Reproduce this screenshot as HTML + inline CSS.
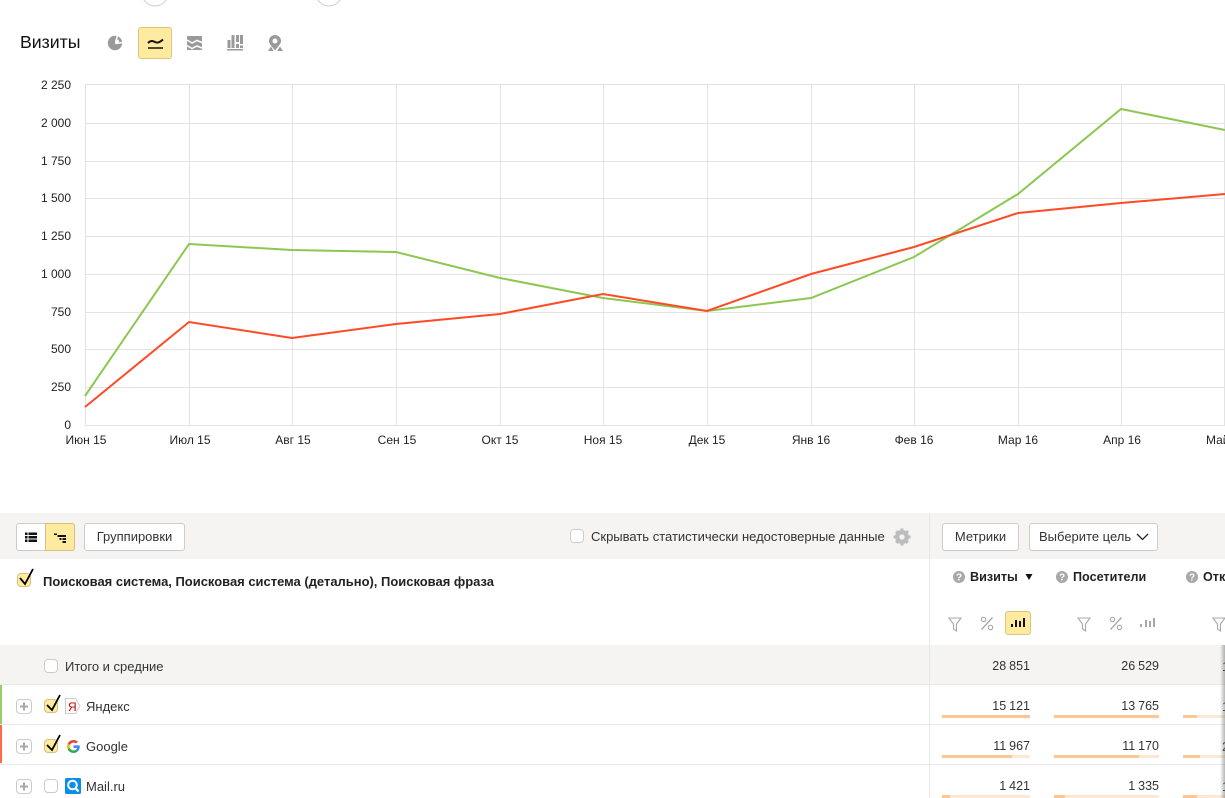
<!DOCTYPE html>
<html lang="ru"><head><meta charset="utf-8"><title>Визиты</title>
<style>
html,body{margin:0;padding:0;background:#fff}
#p{position:relative;width:1225px;height:798px;overflow:hidden;font-family:"Liberation Sans",sans-serif;font-size:12px;color:#222;background:#fff}
.a{position:absolute;white-space:nowrap}
.btn{position:absolute;box-sizing:border-box;height:28px;border:1px solid #ccc;border-radius:3px;background:#fff;line-height:25px;text-align:center;font-size:13px;color:#333}
.cb{position:absolute;box-sizing:border-box;width:14px;height:14px;border:1px solid #ccc;border-radius:4px;background:#fff}
.cb.on{background:#ffeba0;border-color:#d6c27f}
.pl{position:absolute;box-sizing:border-box;left:16px;width:16px;height:15px;border:1px solid #ccc;border-radius:4px;background:#fff}
.n{position:absolute;text-align:right;font-size:12.5px;word-spacing:-.5px;color:#333;white-space:nowrap}
.bar{position:absolute;height:3px;background:#fde8d4}
.bar i{position:absolute;left:0;top:0;height:3px;background:#fdc693}
.t{position:absolute;font-size:13px;color:#333;white-space:nowrap}
.h{position:absolute;font-size:12.6px;font-weight:bold;color:#222;white-space:nowrap}
svg{position:absolute;overflow:visible}
</style></head><body><div id="p">

<svg style="left:0;top:0" width="360" height="10"><circle cx="155" cy="-7" r="13" fill="#fff" stroke="#ccc"/><circle cx="329" cy="-7" r="13" fill="#fff" stroke="#ccc"/></svg>

<div class="a" style="left:20px;top:32px;font-size:17.7px;color:#111">Визиты</div>
<div class="a" style="left:138px;top:27px;width:34px;height:32px;box-sizing:border-box;background:#ffeba0;border:1px solid #dcc77f;border-radius:3px"></div>

<svg style="left:100px;top:25px" width="200" height="35">
<circle cx="15" cy="18" r="7.200" fill="#9a9a9a"/><path d="M15.500 18.500L17.500 10M15.500 18.500L23 17.500" stroke="#fff" stroke-width="1.500" fill="none"/><circle cx="17" cy="16.500" r="2" fill="#fff"/>
<path d="M48 18c3-3 5-2 7-1s4 1 8-2.500" fill="none" stroke="#111" stroke-width="2"/><path d="M48 23h15" stroke="#111" stroke-width="1.500"/>
<rect x="87" y="11" width="15" height="14" fill="#9a9a9a"/><path d="M87 15l5 3 5-2.500 5 2M87 20.500l5 3 5-2.500 5 2" fill="none" stroke="#fff" stroke-width="1.500"/>
<path d="M127.500 15h3v8h-3zM131.500 10h3v13h-3zM136 10h3v7h-3zM136 19h3v4h-3zM140 10h3v9h-3zM140 20.500h3v2.500h-3zM127 24h16v1.500h-16z" fill="#9a9a9a"/>
<path d="M175 10a6 6 0 0 0-6 6c0 3 3 5.500 6 9.500 3-4 6-6.500 6-9.500a6 6 0 0 0-6-6zm0 3.500a2.500 2.500 0 1 1 0 5 2.500 2.500 0 0 1 0-5z" fill="#9a9a9a" fill-rule="evenodd"/><path d="M168 26l3-4.500 2.500 4.500zM177 26l3-4.500 3 4.500z" fill="#9a9a9a"/>
</svg>

<svg style="left:0;top:0" width="1225" height="450" font-family="Liberation Sans, sans-serif" font-size="12" fill="#222">
<g stroke="#e3e3e3" fill="none" shape-rendering="crispEdges">
<path d="M85.500 84V426M189.500 84V426M292.500 84V426M396.500 84V426M500.500 84V426M603.500 84V426M707.500 84V426M811.500 84V426M914.500 84V426M1018.500 84V426M1121.500 84V426M1224.500 84V426"/>
<path d="M85 84.500H1225M85 123.500H1225M85 161.500H1225M85 198.500H1225M85 236.500H1225M85 274.500H1225M85 312.500H1225M85 349.500H1225M85 387.500H1225M85 425.500H1225"/>
</g>
<polyline fill="none" stroke="#8cc751" stroke-width="2" points="85,396 189,244 292,250 396,252 500,278 603,298 707,311 811,298 914,257 1018,194 1121,109 1225,130"/>
<polyline fill="none" stroke="#ff4a25" stroke-width="2" points="85,407 189,322 292,338 396,324 500,314 603,294 707,311 811,274 914,247 1018,213 1121,203 1225,194"/>
<g text-anchor="end">
<text x="71" y="89">2 250</text><text x="71" y="127">2 000</text><text x="71" y="165">1 750</text><text x="71" y="202">1 500</text><text x="71" y="240">1 250</text><text x="71" y="278">1 000</text><text x="71" y="316">750</text><text x="71" y="353">500</text><text x="71" y="391">250</text><text x="71" y="429">0</text>
</g>
<g text-anchor="middle">
<text x="86" y="444">Июн 15</text><text x="190" y="444">Июл 15</text><text x="293" y="444">Авг 15</text><text x="397" y="444">Сен 15</text><text x="500" y="444">Окт 15</text><text x="603" y="444">Ноя 15</text><text x="707" y="444">Дек 15</text><text x="811" y="444">Янв 16</text><text x="914" y="444">Фев 16</text><text x="1018" y="444">Мар 16</text><text x="1122" y="444">Апр 16</text>
</g>
<text x="1206" y="444">Май 16</text>
</svg>

<div class="a" style="left:0;top:513px;width:1225px;height:46px;background:#f5f4f2"></div>
<div class="a" style="left:0;top:645px;width:1225px;height:39px;background:#f5f4f2"></div>
<div class="a" style="left:0;top:684px;width:1225px;height:1px;background:#e8e8e8"></div>
<div class="a" style="left:0;top:724px;width:1225px;height:1px;background:#e8e8e8"></div>
<div class="a" style="left:0;top:764px;width:1225px;height:1px;background:#e8e8e8"></div>
<div class="a" style="left:929px;top:513px;width:1px;height:285px;background:#e8e8e8"></div>
<div class="a" style="left:0;top:685px;width:2px;height:39px;background:#96ce6a"></div>
<div class="a" style="left:0;top:725px;width:2px;height:38px;background:#ff6a4a"></div>

<div class="a" style="left:16px;top:523px;width:59px;height:28px;box-sizing:border-box;border:1px solid #ccc;border-radius:3px;background:#fff"></div>
<div class="a" style="left:45px;top:523px;width:30px;height:28px;box-sizing:border-box;border:1px solid #d6c27f;border-radius:0 3px 3px 0;background:#ffeba0"></div>
<svg style="left:16px;top:523px" width="59" height="28">
<path d="M9 9.500h2.500V12H9zM9 13h2.500v2.500H9zM9 16.500h2.500V19H9zM12.500 9.500H21V12h-8.500zM12.500 13H21v2.500h-8.500zM12.500 16.500H21V19h-8.500z" fill="#111"/>
<path d="M38 10.500h3v1.500h-3zM41.500 12h8.500v2h-8.500zM43.500 15h2v2h-2zM46.500 15h3.500v2h-3.500zM46.500 18h3.500v2h-3.500z" fill="#111"/>
</svg>
<div class="btn" style="left:84px;top:523px;width:101px">Группировки</div>

<div class="cb" style="left:570px;top:529px"></div>
<div class="t" style="left:591px;top:529px">Скрывать статистически недостоверные данные</div>
<svg style="left:893px;top:528px" width="18" height="18" viewBox="0 0 18 18"><circle cx="9" cy="9" r="4.800" fill="none" stroke="#bdbdbd" stroke-width="4.400"/><path d="M7.500.500h3v3h-3zM7.500 14.500h3v3h-3zM.5 7.500h3v3h-3zM14.500 7.500h3v3h-3z" fill="#bdbdbd"/><path d="M2 4.500l2.500-2.500 2 2-2.500 2.500zM11.500 14l2.500-2.500 2 2-2.500 2.500zM11.500 4l2.500-2 2 2-2 2.500zM2 13.500l2.500-2 2 2-2 2.500z" fill="#bdbdbd"/></svg>

<div class="btn" style="left:942px;top:523px;width:77px">Метрики</div>
<div class="btn" style="left:1029px;top:523px;width:129px;text-align:left;padding-left:9px">Выберите цель</div>
<svg style="left:1136px;top:532px" width="14" height="10"><path d="M1 2l5.500 5.500L12 2" fill="none" stroke="#222" stroke-width="1.300"/></svg>

<div class="cb on" style="left:17px;top:573px"></div>
<svg style="left:16px;top:567px" width="20" height="20"><path d="M4 11l5 6 8-15" fill="none" stroke="#000" stroke-width="1.800"/></svg>
<div class="t" style="left:43px;top:574px;font-weight:bold;color:#222;font-size:12.97px">Поисковая система, Поисковая система (детально), Поисковая фраза</div>

<svg style="left:953px;top:571px" width="250" height="14">
<g fill="#a8a8a8"><circle cx="6" cy="6" r="6"/><circle cx="109" cy="6" r="6"/><circle cx="239" cy="6" r="6"/></g>
<g fill="#fff" font-family="Liberation Sans, sans-serif" font-size="10" font-weight="bold" text-anchor="middle"><text x="6" y="9.500">?</text><text x="109" y="9.500">?</text><text x="239" y="9.500">?</text></g>
<path d="M72.500 3h7l-3.500 6z" fill="#111"/>
</svg>
<div class="h" style="left:970px;top:570px">Визиты</div>
<div class="h" style="left:1073px;top:570px">Посетители</div>
<div class="h" style="left:1203px;top:570px">Отказы</div>

<div class="a" style="left:1005px;top:611px;width:26px;height:24px;box-sizing:border-box;background:#ffeba0;border:1px solid #dcc77f;border-radius:3px"></div>
<svg style="left:945px;top:612px" width="280" height="24">
<g fill="none" stroke="#a8a8a8" stroke-width="1.100">
<path d="M4 6h12l-4.500 6v7l-3-2v-5z"/><path d="M133 6h12l-4.500 6v7l-3-2v-5z"/><path d="M268 6h12l-4.500 6v7l-3-2v-5z"/>
<circle cx="38.500" cy="7.500" r="2.200"/><circle cx="45.500" cy="15.500" r="2.200"/><path d="M47.500 5.500L36.500 17.500" stroke-width="1.300"/>
<circle cx="167.500" cy="7.500" r="2.200"/><circle cx="174.500" cy="15.500" r="2.200"/><path d="M176.500 5.500L165.500 17.500" stroke-width="1.300"/>
</g>
<path d="M66 12h2v3h-2zM70 8h2v7h-2zM74 9h2v6h-2zM78 6h2v9h-2z" fill="#111"/>
<path d="M195 12h2v3h-2zM200 8h2v7h-2zM204 9h2v6h-2zM208 6h2v9h-2z" fill="#a8a8a8"/>
</svg>

<div class="cb" style="left:44px;top:659px"></div>
<div class="t" style="left:65px;top:659px">Итого и средние</div>

<div class="pl" style="top:699px"></div><div class="pl" style="top:739px"></div><div class="pl" style="top:779px"></div>
<svg style="left:16px;top:690px" width="16" height="108"><path d="M4 16.500h8M8 12.500v8M4 56.500h8M8 52.500v8M4 96.500h8M8 92.500v8" stroke="#aaa" stroke-width="2" fill="none"/></svg>

<div class="cb on" style="left:44px;top:699px"></div>
<div class="cb on" style="left:44px;top:739px"></div>
<div class="cb" style="left:44px;top:779px"></div>
<svg style="left:44px;top:693px" width="20" height="60"><path d="M3 12l5 5 8-15M3 52l5 5 8-15" fill="none" stroke="#000" stroke-width="1.800"/></svg>

<svg style="left:65px;top:698px" width="16" height="16"><path d="M.5.500h10l4.500 7.500-4.500 7.500H.5z" fill="#fff" stroke="#ccc"/><text x="3" y="13" font-family="Liberation Sans, sans-serif" font-size="12" fill="#c00">Я</text></svg>
<svg style="left:66.500px;top:739.500px" width="13" height="13" viewBox="0 0 48 48">
<path fill="#ea4335" d="M24 9.500c3.500 0 6.700 1.200 9.200 3.600l6.900-6.900C35.900 2.400 30.500 0 24 0 14.600 0 6.500 5.400 2.600 13.200l8 6.200C12.500 13.700 17.800 9.500 24 9.500z"/>
<path fill="#4285f4" d="M47 24.500c0-1.600-.1-3.100-.4-4.500H24v9h12.900c-.6 3-2.200 5.500-4.800 7.200l7.700 6C44.400 37.900 47 31.800 47 24.500z"/>
<path fill="#fbbc05" d="M10.500 28.600A14.500 14.500 0 0 1 10.500 19.400l-8-6.200a24 24 0 0 0 0 21.600z"/>
<path fill="#34a853" d="M24 48c6.500 0 11.900-2.100 15.900-5.800l-7.700-6c-2.200 1.500-4.900 2.300-8.200 2.300-6.200 0-11.500-4.200-13.400-9.900l-8 6.200C6.500 42.600 14.600 48 24 48z"/>
</svg>
<svg style="left:65px;top:778px" width="16" height="16"><rect width="16" height="16" rx="1.500" fill="#0a8ee8"/><circle cx="7.500" cy="7" r="4.300" fill="none" stroke="#fff" stroke-width="2"/><path d="M10.500 10l3 3.500" stroke="#fff" stroke-width="2.200"/></svg>

<div class="t" style="left:86px;top:699px">Яндекс</div>
<div class="t" style="left:86px;top:739px">Google</div>
<div class="t" style="left:86px;top:779px">Mail.ru</div>

<div class="n" style="right:195px;top:659px">28 851</div><div class="n" style="right:66px;top:659px">26 529</div>
<div class="n" style="right:195px;top:699px">15 121</div><div class="n" style="right:66px;top:699px">13 765</div>
<div class="n" style="right:195px;top:739px">11 967</div><div class="n" style="right:66px;top:739px">11 170</div>
<div class="n" style="right:195px;top:779px">1 421</div><div class="n" style="right:66px;top:779px">1 335</div>
<div class="t" style="left:1222px;top:659px">1</div><div class="t" style="left:1222px;top:699px">1</div><div class="t" style="left:1222px;top:739px">2</div><div class="t" style="left:1222px;top:779px">1</div>

<div class="bar" style="left:942px;top:715px;width:88px"><i style="width:88px"></i></div>
<div class="bar" style="left:1054px;top:715px;width:105px"><i style="width:105px"></i></div>
<div class="bar" style="left:1183px;top:715px;width:42px"><i style="width:14px"></i></div>
<div class="bar" style="left:942px;top:755px;width:88px"><i style="width:70px"></i></div>
<div class="bar" style="left:1054px;top:755px;width:105px"><i style="width:85px"></i></div>
<div class="bar" style="left:1183px;top:755px;width:42px"><i style="width:17px"></i></div>
<div class="bar" style="left:942px;top:795px;width:88px"><i style="width:8px"></i></div>
<div class="bar" style="left:1054px;top:795px;width:105px"><i style="width:11px"></i></div>
<div class="bar" style="left:1183px;top:795px;width:42px"><i style="width:14px"></i></div>

<div class="a" style="left:1220px;top:645px;width:5px;height:153px;background:linear-gradient(to right,rgba(120,120,120,0),rgba(110,110,110,.5))"></div>
</div></body></html>
